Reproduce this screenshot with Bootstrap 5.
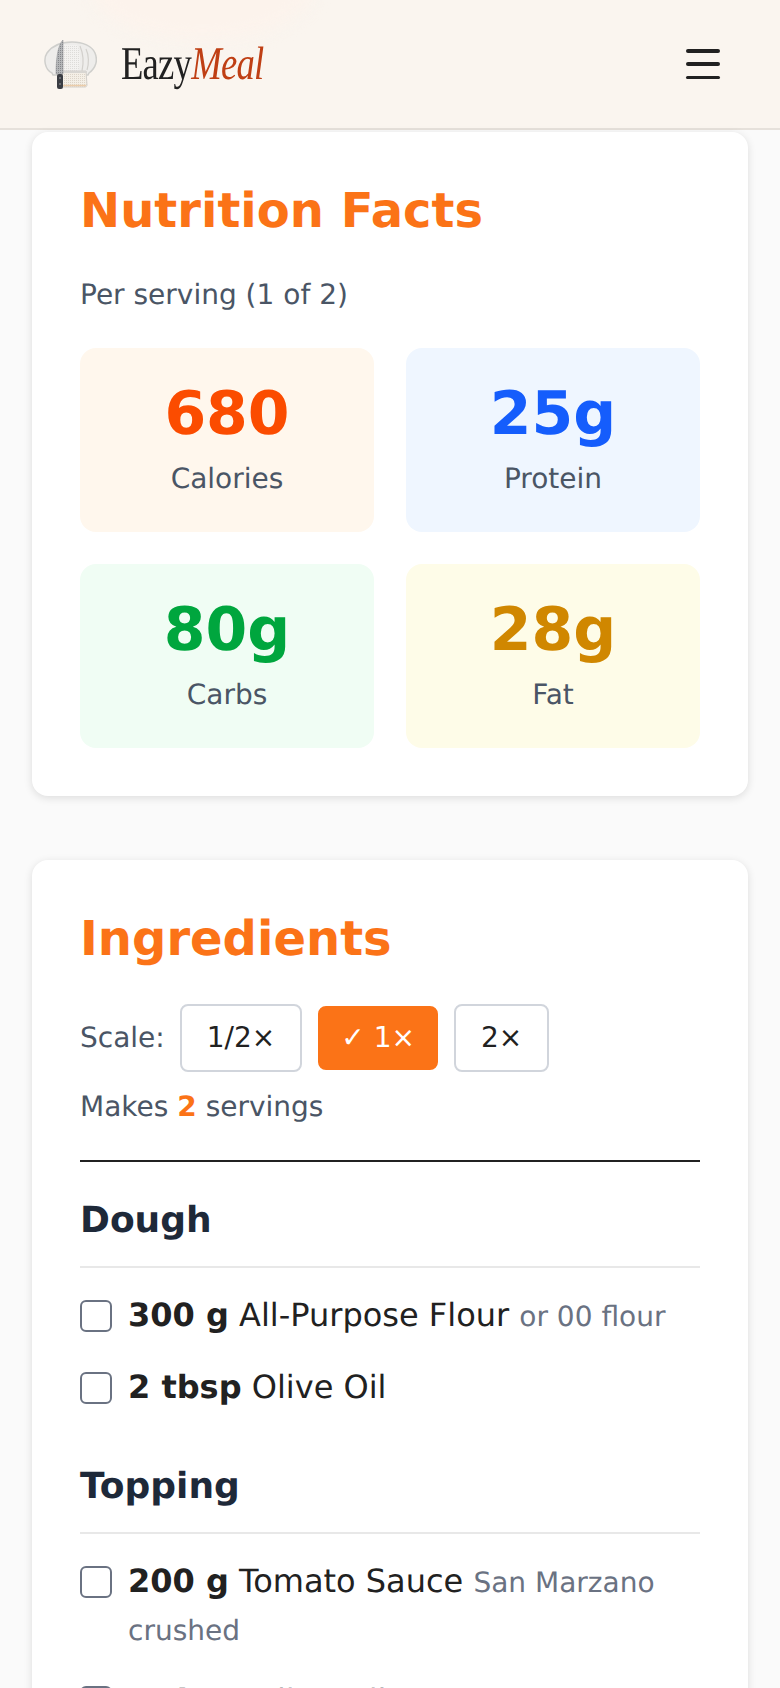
<!DOCTYPE html>
<html lang="en">
<head>
<meta charset="utf-8">
<title>Nutrition Facts</title>
<link href="https://cdn.jsdelivr.net/npm/bootstrap@5.3.0/dist/css/bootstrap.min.css" rel="stylesheet">
<style>
html,body{height:1688px;overflow:hidden}
body{background:#fafafa;font-family:"DejaVu Sans",sans-serif;color:#212121;text-rendering:geometricPrecision}
.topbar{background:#faf5ef;height:130px;border-bottom:2px solid #e6e1db;padding:0 32px 0 44px;position:relative;flex-wrap:nowrap;overflow:hidden}
.topbar-glow{position:absolute;left:90px;top:-70px;width:225px;height:110px;border-radius:50%;background:#fcf3ec;filter:blur(8px)}
.logo-hat{width:53px;height:49px;flex:none}
.logo-word{font-family:"Liberation Serif",serif;font-size:47px;letter-spacing:-1px;line-height:1;margin-left:24px;transform:scaleX(.78);transform-origin:left center;color:#212121}
.logo-word em{color:#bf3f14}
.burger{width:34px;height:30px;padding:0;border:0;background:none;margin-right:28px;display:flex;flex-direction:column;justify-content:space-between}
.burger i{display:block;height:3.500px;border-radius:2px;background:#212121}
.page-wrap{padding:2px 32px 0}
.sheet{border:0;border-radius:16px;box-shadow:0 2px 8px rgba(0,0,0,.12);padding:48px}
.sheet+.sheet{margin-top:64px}
.sheet-title{color:#fb7317;font-size:48px;font-weight:700;line-height:62px;margin-bottom:32px}
.muted-line{font-size:28px;color:#4a5565;line-height:42px}
.stat{border-radius:16px;height:184px;text-align:center;padding-top:30px}
.stat b{display:block;font-size:60px;line-height:72px;margin-bottom:8px}
.stat span{font-size:28px;line-height:42px;color:#4a5565}
.st-a{background:#fff7ed}.st-a b{color:#fb4c00}
.st-b{background:#eff6ff}.st-b b{color:#155dfc}
.st-c{background:#f0fdf4}.st-c b{color:#00a63e}
.st-d{background:#fefce8}.st-d b{color:#d08700}
.stat-grid{display:grid;grid-template-columns:1fr 1fr;gap:32px;margin-top:32px}
.scale-row{margin-top:34px}
.scale-label{margin-right:-1px}
.scale-btn{font-size:28px;line-height:42px;padding:11px 25px;background:#fff;border:2px solid #d1d5dc;border-radius:8px;color:#212121}
.scale-btn.is-on{background:#fb7317;border-color:#fb7317;color:#fff;padding:9px 21px}
.makes{margin-top:14px}
.makes b{color:#fb7317}
.rule-dark{border:0;border-top:2px solid #212121;opacity:1;margin:32px 0 31px}
.group-title{font-size:36px;font-weight:700;color:#1e2939;line-height:54px;padding:1px 0 18px;border-bottom:2px solid #e8e8e8;margin-bottom:24px}
.ing{display:flex;gap:16px;font-size:32px;line-height:48px;margin-bottom:24px}
.ing .form-check-input{width:32px;height:32px;margin:8px 0 0;flex:none;border:2px solid #6a7282;border-radius:6px;background-color:#fff}
.ing>span{margin:-1px 0 1px}
.ing small{font-size:28px;line-height:1;color:#6a7282}
.group-gap{margin-top:23px}
</style>
</head>
<body>
<nav class="navbar topbar d-flex justify-content-between align-items-center">
  <div class="topbar-glow"></div>
  <a class="d-flex align-items-center text-decoration-none position-relative" href="#">
    <svg class="logo-hat" viewBox="0 0 53 49" aria-hidden="true">
      <defs>
        <pattern id="dith" width="2" height="2" patternUnits="userSpaceOnUse"><rect width="2" height="2" fill="#f3f2f0"/><rect width="1" height="1" fill="#dddcd9"/></pattern>
        <pattern id="dith2" width="2" height="2" patternUnits="userSpaceOnUse"><rect width="2" height="2" fill="#f4efe6"/><rect width="1" height="1" fill="#dcd4c8"/></pattern>
        <pattern id="dith3" width="2" height="2" patternUnits="userSpaceOnUse"><rect width="2" height="2" fill="#b4b6b8"/><rect width="1" height="1" fill="#85878b"/></pattern>
      </defs>
      <path d="M8 33C1 30-1 19 3 13 8 6 17 2 28 2c11 0 20 4 23 11 3 7 1 15-6 20l-1 2H9z" fill="#eeedeb" stroke="#cfcfcc" stroke-width="1.500"/>
      <path d="M20 5h13c4 7 4 18 1 26H20z" fill="url(#dith)"/>
      <path d="M16 6c-2 7-3 16-3 25M36 6c3 7 4 16 2 25M42 9c3 6 3 15 1 21" stroke="#d2d0cc" stroke-width="1.200" fill="none"/>
      <path d="M14 31h28l1 14c0 1-1 2-2 2H14z" fill="url(#dith2)" stroke="#d2cfca"/>
      <path d="M18 31h25v2H18z" fill="#d8d6d2"/>
      <path d="M15 45.500h27" stroke="#eccdaa" stroke-width="1.500"/>
      <path d="M19 0c-4 4-7 14-7 34h7z" fill="url(#dith3)" stroke="#8d8f92" stroke-width=".5"/>
      <rect x="13" y="34" width="6" height="15" rx="2" fill="#3a3d43"/>
      <circle cx="16" cy="38" r=".8" fill="#a9abae"/><circle cx="16" cy="44" r=".8" fill="#a9abae"/>
    </svg>
    <span class="logo-word">Eazy<em>Meal</em></span>
  </a>
  <button class="burger position-relative" type="button" aria-label="Menu"><i></i><i></i><i></i></button>
</nav>
<main class="page-wrap">
  <section class="card sheet">
    <h2 class="sheet-title">Nutrition Facts</h2>
    <p class="muted-line mb-0">Per serving (1 of 2)</p>
    <div class="stat-grid">
      <div class="stat st-a"><b>680</b><span>Calories</span></div>
      <div class="stat st-b"><b>25g</b><span>Protein</span></div>
      <div class="stat st-c"><b>80g</b><span>Carbs</span></div>
      <div class="stat st-d"><b>28g</b><span>Fat</span></div>
    </div>
  </section>
  <section class="card sheet">
    <h2 class="sheet-title mb-0">Ingredients</h2>
    <div class="d-flex align-items-center gap-3 muted-line scale-row">
      <span class="scale-label">Scale:</span>
      <button class="btn scale-btn" type="button">1/2×</button>
      <button class="btn scale-btn is-on" type="button">✓ 1×</button>
      <button class="btn scale-btn" type="button">2×</button>
    </div>
    <p class="muted-line makes mb-0">Makes <b>2</b> servings</p>
    <hr class="rule-dark">
    <h3 class="group-title">Dough</h3>
    <label class="ing"><input class="form-check-input" type="checkbox"><span><b>300 g</b> All-Purpose Flour <small>or 00 flour</small></span></label>
    <label class="ing"><input class="form-check-input" type="checkbox"><span><b>2 tbsp</b> Olive Oil</span></label>
    <h3 class="group-title group-gap">Topping</h3>
    <label class="ing"><input class="form-check-input" type="checkbox"><span><b>200 g</b> Tomato Sauce <small>San Marzano crushed</small></span></label>
    <label class="ing"><input class="form-check-input" type="checkbox"><span><b>1 tbsp</b> Olive Oil</span></label>
  </section>
</main>
<script src="https://cdn.jsdelivr.net/npm/bootstrap@5.3.0/dist/js/bootstrap.bundle.min.js"></script>
</body>
</html>
